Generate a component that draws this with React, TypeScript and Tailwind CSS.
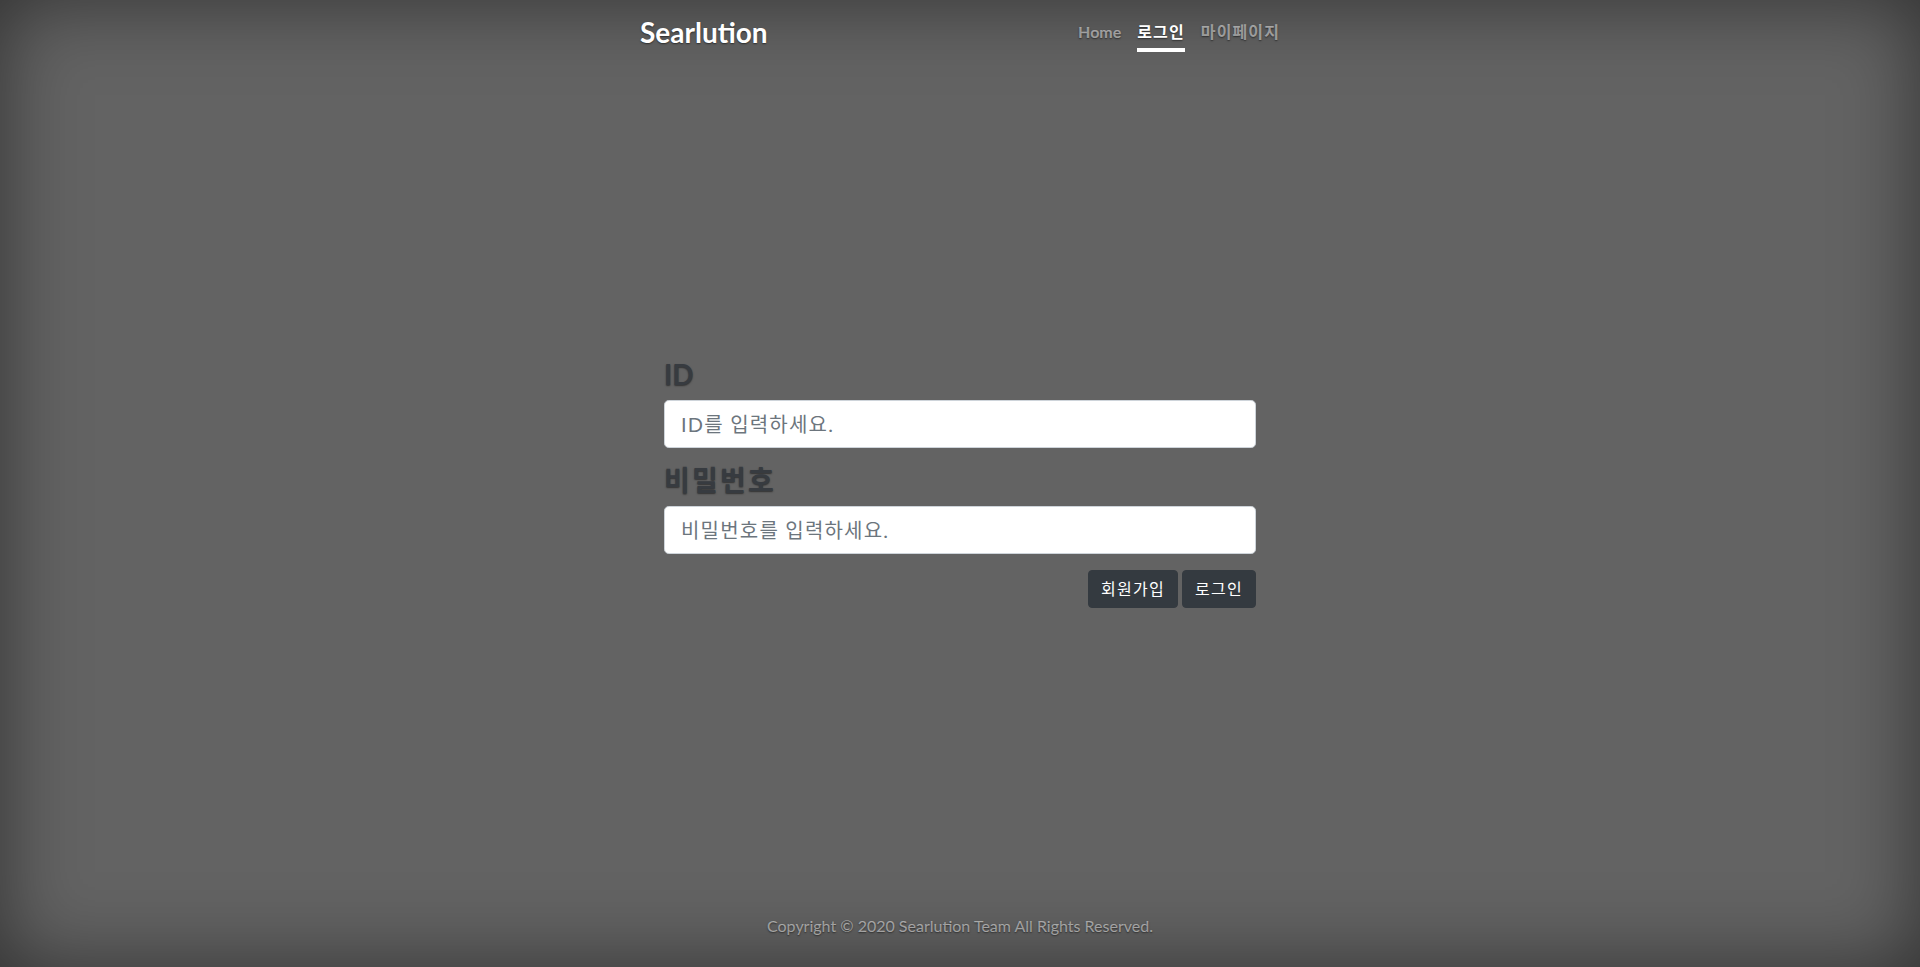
import React from "react";

export default function App() {
  const font = "font-['Lato','Noto_Sans_CJK_KR',sans-serif]";
  const inputCls =
    "block w-full h-12 px-4 py-2 text-[20px] leading-[1.5] tracking-[0.06em] bg-white text-[#495057] border border-[#ced4da] rounded-[0.3rem] placeholder:text-[#6c757d] outline-none [text-shadow:none]";
  const btnCls =
    "h-[38px] px-3 text-[16px] leading-6 tracking-[0.08em] bg-[#343a40] text-white border border-[#343a40] rounded-[0.25rem] [text-shadow:none]";
  return (
    <div
      className={`h-[967px] w-full flex bg-[#636363] shadow-[inset_0_0_5rem_rgba(0,0,0,0.5)] text-white [text-shadow:0_0.05rem_0.1rem_rgba(0,0,0,0.5)] ${font}`}
    >
      <div className="w-full max-w-[672px] mx-auto p-4 flex flex-col h-full">
        <header className="mb-auto flex items-start justify-between">
          <h3 className="text-[28px] font-bold leading-[1.2] m-0">Searlution</h3>
          <nav className="flex gap-4 text-[16px] font-bold leading-6">
            <a className="py-1 border-b-4 border-transparent text-white/50">Home</a>
            <a className="py-1 border-b-4 border-white text-white tracking-[0.07em]">로그인</a>
            <a className="py-1 border-b-4 border-transparent text-white/50 tracking-[0.07em]">마이페이지</a>
          </nav>
        </header>

        <main className="px-6">
          <form onSubmit={(e) => e.preventDefault()}>
            <div className="mb-4">
              <h3 className="text-[28px] font-bold leading-[1.2] mb-2 text-[#373b40]">ID</h3>
              <input type="text" placeholder="ID를 입력하세요." className={inputCls} />
            </div>
            <div className="mb-4">
              <h3 className="text-[28px] font-semibold leading-[1.2] mb-2 text-[#373b40] tracking-[0.08em]">
                비밀번호
              </h3>
              <input type="password" placeholder="비밀번호를 입력하세요." className={inputCls} />
            </div>
            <div className="flex justify-end gap-1">
              <button className={btnCls}>회원가입</button>
              <button className={btnCls}>로그인</button>
            </div>
          </form>
        </main>

        <footer className="mt-auto text-center text-white/50">
          <p className="mb-[13px] text-[16px] leading-6">Copyright © 2020 Searlution Team All Rights Reserved.</p>
        </footer>
      </div>
    </div>
  );
}
